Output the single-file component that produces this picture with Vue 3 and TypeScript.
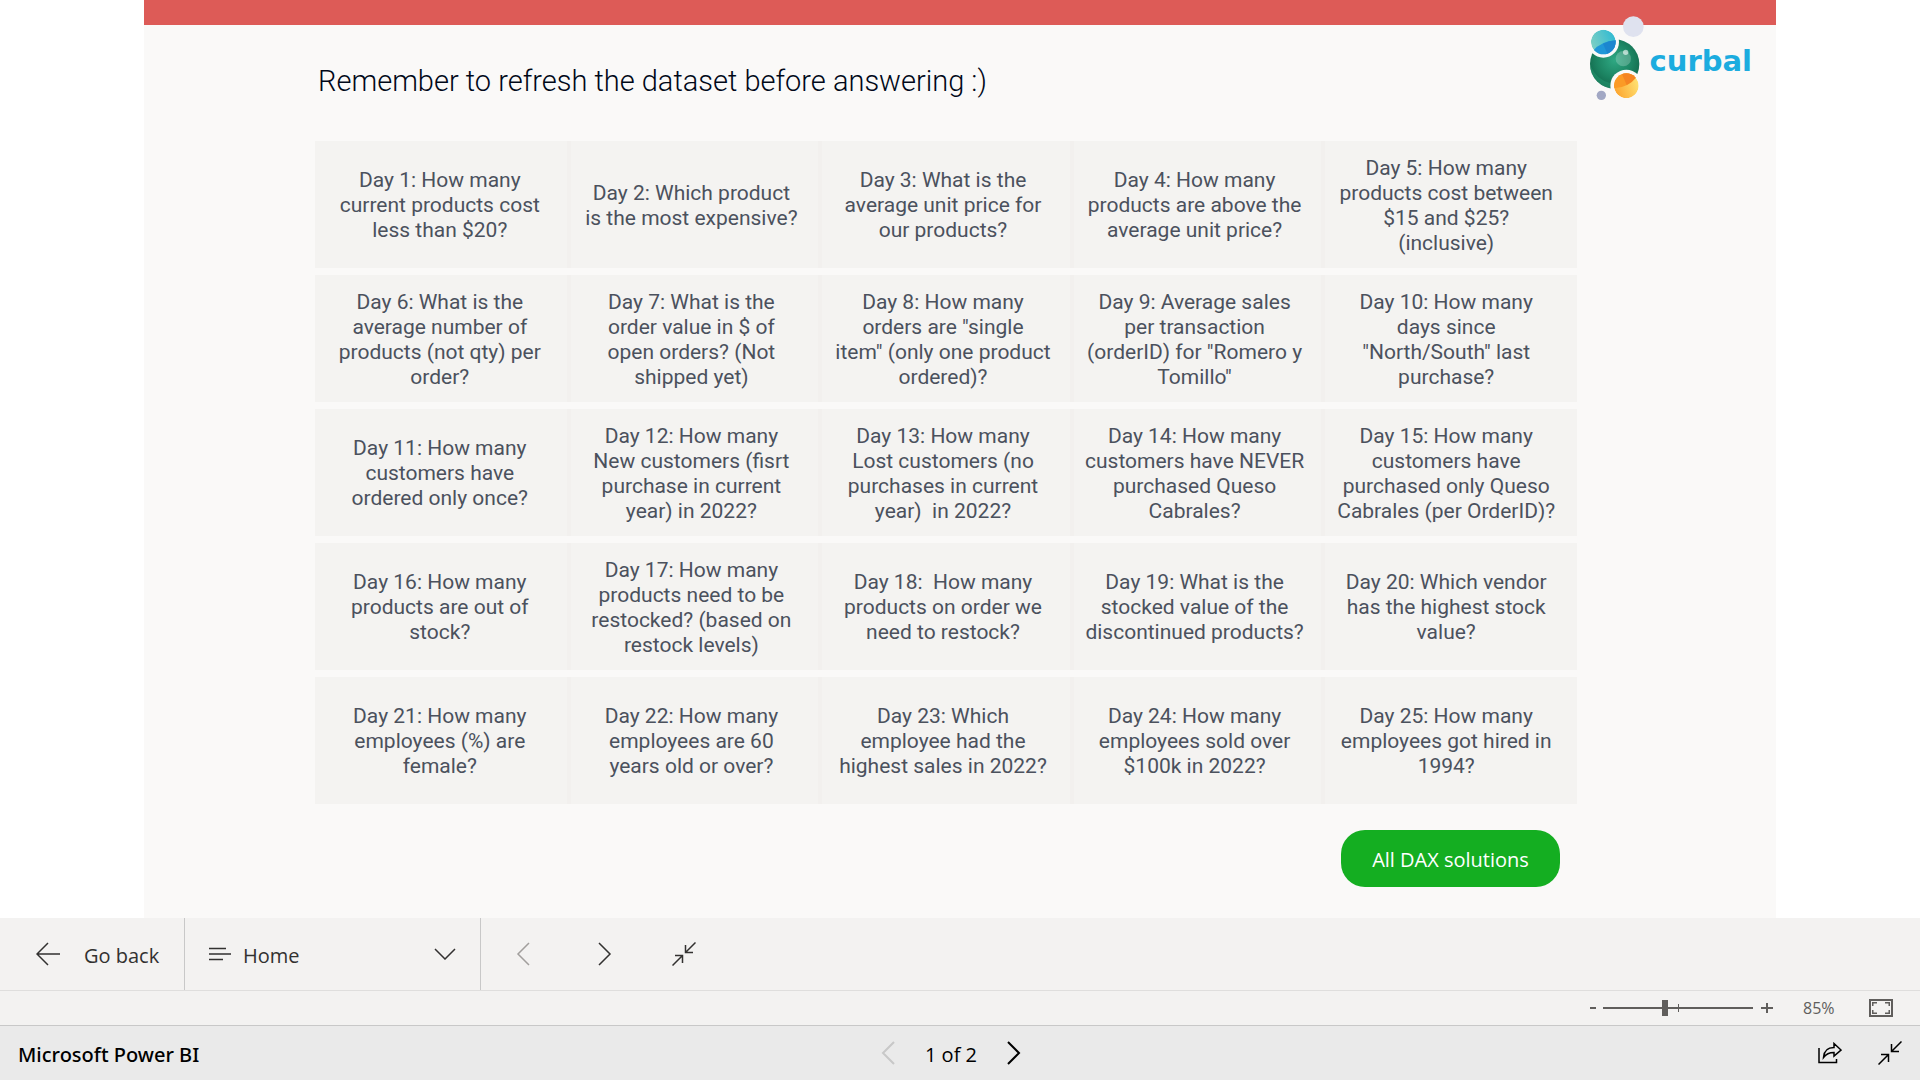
<script setup lang="ts">
import { ref } from 'vue'

const questions: string[] = [
  'Day 1: How many\ncurrent products cost\nless than $20?',
  'Day 2: Which product\nis the most expensive?',
  'Day 3: What is the\naverage unit price for\nour products?',
  'Day 4: How many\nproducts are above the\naverage unit price?',
  'Day 5: How many\nproducts cost between\n$15 and $25?\n(inclusive)',
  'Day 6: What is the\naverage number of\nproducts (not qty) per\norder?',
  'Day 7: What is the\norder value in $ of\nopen orders? (Not\nshipped yet)',
  'Day 8: How many\norders are "single\nitem" (only one product\nordered)?',
  'Day 9: Average sales\nper transaction\n(orderID) for "Romero y\nTomillo"',
  'Day 10: How many\ndays since\n"North/South" last\npurchase?',
  'Day 11: How many\ncustomers have\nordered only once?',
  'Day 12: How many\nNew customers (fisrt\npurchase in current\nyear) in 2022?',
  'Day 13: How many\nLost customers (no\npurchases in current\nyear)  in 2022?',
  'Day 14: How many\ncustomers have NEVER\npurchased Queso\nCabrales?',
  'Day 15: How many\ncustomers have\npurchased only Queso\nCabrales (per OrderID)?',
  'Day 16: How many\nproducts are out of\nstock?',
  'Day 17: How many\nproducts need to be\nrestocked? (based on\nrestock levels)',
  'Day 18:  How many\nproducts on order we\nneed to restock?',
  'Day 19: What is the\nstocked value of the\ndiscontinued products?',
  'Day 20: Which vendor\nhas the highest stock\nvalue?',
  'Day 21: How many\nemployees (%) are\nfemale?',
  'Day 22: How many\nemployees are 60\nyears old or over?',
  'Day 23: Which\nemployee had the\nhighest sales in 2022?',
  'Day 24: How many\nemployees sold over\n$100k in 2022?',
  'Day 25: How many\nemployees got hired in\n1994?',
]

const bookmark = ref('Home')
const zoomPosition = ref(41)
</script>

<template>
  <div class="app">
    <main class="report">
      <div class="logo">
        <svg class="logo-mark" viewBox="84 45 174 258" aria-hidden="true">
          <defs>
            <radialGradient id="g-green" cx="0.5" cy="0.42" r="0.6">
              <stop offset="0" stop-color="#2fa883" />
              <stop offset="0.6" stop-color="#1c8462" />
              <stop offset="1" stop-color="#12664a" />
            </radialGradient>
            <linearGradient id="g-cyan" x1="0" y1="0.6" x2="1" y2="0.2">
              <stop offset="0" stop-color="#7dcfc4" />
              <stop offset="1" stop-color="#2cb9d3" />
            </linearGradient>
            <linearGradient id="g-yellow" x1="0" y1="0.8" x2="1" y2="0.4">
              <stop offset="0" stop-color="#fca22c" />
              <stop offset="1" stop-color="#ffe172" />
            </linearGradient>
            <clipPath id="c-blue"><circle cx="130" cy="126" r="37" /></clipPath>
            <clipPath id="c-orange"><circle cx="199" cy="257" r="37" /></clipPath>
          </defs>
          <circle cx="220" cy="80" r="31" fill="#dfe2ef" />
          <circle cx="164" cy="192" r="74" fill="url(#g-green)" />
          <path d="M90 195Q110 240 152 250L152 265A74 74 0 0 1 90 195Z" fill="#23936d" opacity="0.6" />
          <circle cx="190" cy="176" r="23" fill="#fff" opacity="0.22" />
          <circle cx="197" cy="157" r="8" fill="#fff" opacity="0.6" />
          <circle cx="130" cy="126" r="47" fill="#faf9f8" />
          <circle cx="199" cy="257" r="48" fill="#faf9f8" />
          <g clip-path="url(#c-blue)">
            <circle cx="130" cy="126" r="37" fill="url(#g-cyan)" />
            <path d="M98 154Q122 123 170 121V170H98Z" fill="#2097d8" />
            <path d="M129 131Q147 122 170 121V170H146Z" fill="#1c86cf" />
          </g>
          <g clip-path="url(#c-orange)">
            <circle cx="199" cy="257" r="37" fill="url(#g-yellow)" />
            <path d="M158 265Q202 266 229 232V210H158Z" fill="#fb9a26" />
            <path d="M186 222L200 255Q217 247 229 232V210H186Z" fill="#f58422" />
          </g>
          <circle cx="124" cy="286" r="14" fill="#a2a8c4" />
        </svg>
        <span class="logo-text">curbal</span>
      </div>

      <h1 class="title">Remember to refresh the dataset before answering :)</h1>

      <div class="grid">
        <button v-for="q in questions" :key="q" type="button" class="card">{{ q }}</button>
      </div>

      <div class="actions">
        <button type="button" class="solutions">All DAX solutions</button>
      </div>
    </main>

    <nav class="toolbar">
      <button type="button" class="go-back">
        <svg width="24" height="24" viewBox="0 0 24 24"><path d="M12 1L1 12L12 23M1 12H24" /></svg>
        <span class="label">Go back</span>
      </button>
      <label class="bookmarks">
        <svg class="list-icon" width="22" height="14" viewBox="0 0 22 14"><path d="M0 1.5H17M0 7H22M0 12.5H14" /></svg>
        <select v-model="bookmark" class="label" aria-label="Page">
          <option>Home</option>
        </select>
        <svg class="caret" width="22" height="12" viewBox="0 0 22 12"><path d="M1 1L11 11L21 1" /></svg>
      </label>
      <div class="steps">
        <button type="button" class="icon-button" aria-label="Previous" disabled>
          <svg width="24" height="24" viewBox="0 0 24 24"><path d="M17 1L6 12L17 23" /></svg>
        </button>
        <button type="button" class="icon-button" aria-label="Next">
          <svg width="24" height="24" viewBox="0 0 24 24"><path d="M7 1L18 12L7 23" /></svg>
        </button>
        <button type="button" class="icon-button" aria-label="Exit full screen">
          <svg width="24" height="24" viewBox="0 0 24 24"><path d="M23.500 .5L14 10M13.500 3V10.500H21M.5 23.500L10 14M3 13.500H10.500V21" /></svg>
        </button>
      </div>
    </nav>

    <div class="zoombar">
      <button type="button" class="zoom-button" aria-label="Zoom out">
        <svg width="12" height="12" viewBox="0 0 12 12"><path d="M3 6H9" /></svg>
      </button>
      <div class="slider">
        <input v-model="zoomPosition" type="range" min="0" max="100" aria-label="Zoom" />
      </div>
      <button type="button" class="zoom-button" aria-label="Zoom in">
        <svg width="12" height="12" viewBox="0 0 12 12"><path d="M0 6H12M6 1V11" /></svg>
      </button>
      <span class="percent">85%</span>
      <button type="button" class="zoom-button" aria-label="Fit to page">
        <svg width="24" height="18" viewBox="0 0 24 18">
          <path d="M1 1H23V17H1Z" />
          <path class="thin" d="M3.750 7V3.750H8M16 3.750H20.250V7M20.250 11V14.250H16M8 14.250H3.750V11" />
        </svg>
      </button>
    </div>

    <footer class="footer">
      <a href="#" class="brand label">Microsoft Power BI</a>
      <div class="pager">
        <button type="button" class="page-button" aria-label="Previous page" disabled>
          <svg width="24" height="24" viewBox="0 0 24 24"><path d="M17 1L6 12L17 23" /></svg>
        </button>
        <span class="label">1 of 2</span>
        <button type="button" class="page-button" aria-label="Next page">
          <svg width="24" height="24" viewBox="0 0 24 24"><path d="M7 1L18 12L7 23" /></svg>
        </button>
      </div>
      <div class="footer-actions">
        <button type="button" class="page-button" aria-label="Share">
          <svg class="thin" width="24" height="22" viewBox="0 0 24 22"><path d="M1 6V20.500H18.500V17M5.500 15.500C6 8.500 10 5.500 16 5.500V1.500L23 8L16 14V10.500C11.500 10.500 8 12 5.500 15.500Z" /></svg>
        </button>
        <button type="button" class="page-button" aria-label="Exit full screen mode">
          <svg class="thin" width="24" height="24" viewBox="0 0 24 24"><path d="M23.500 .5L14 10M13.500 3V10.500H21M.5 23.500L10 14M3 13.500H10.500V21" /></svg>
        </button>
      </div>
    </footer>
  </div>
</template>

<style>
body {
  background: #fff;
}
</style>

<style scoped>
.app {
  display: flex;
  flex-direction: column;
  min-height: 100vh;
  font-family: 'Open Sans', 'Noto Sans', sans-serif;
  font-size: 20px;
  color: #323130;
}

.app * {
  box-sizing: border-box;
}

button,
select {
  margin: 0;
  padding: 0;
  border: 0;
  border-radius: 0;
  background: none;
  color: inherit;
  font: inherit;
}

svg {
  display: block;
  flex: none;
  fill: none;
  stroke: currentColor;
  stroke-width: 2px;
}

.label {
  padding-top: 2px;
}

.report {
  position: relative;
  flex: 1;
  margin: 0 7.5%;
  padding: 36px 203px 30px 171px;
  border-top: 25px solid #dd5b57;
  background: #faf9f8;
}

.logo {
  position: absolute;
  top: -10px;
  right: 24px;
  display: flex;
  align-items: center;
  gap: 4px;
}

.logo-mark {
  width: 58px;
  height: 86px;
  stroke: none;
}

.logo-text {
  padding-top: 6px;
  font-family: 'DejaVu Sans', sans-serif;
  font-weight: 700;
  font-size: 29px;
  line-height: 40px;
  color: #1cacdf;
}

.title {
  margin: 0 0 40px;
  padding-left: 3px;
  font-family: Roboto, sans-serif;
  font-weight: 300;
  font-size: 29px;
  line-height: 40px;
  color: #000818;
  white-space: nowrap;
}

.grid {
  display: grid;
  grid-template-columns: repeat(5, 1fr);
  grid-auto-rows: 127px;
  row-gap: 7px;
}

.card {
  margin-right: -4px;
  padding: 2px 6px 0 0;
  background: rgba(240, 239, 237, 0.6);
  font-family: Roboto, sans-serif;
  font-size: 21px;
  line-height: 25px;
  color: #4b515d;
  text-align: center;
  white-space: pre;
}

.actions {
  display: flex;
  justify-content: flex-end;
  padding: 26px 13px 0 0;
}

.solutions {
  width: 219px;
  height: 57px;
  padding-top: 2px;
  border-radius: 24px;
  background: #14ae21;
  color: #fff;
}

.toolbar {
  display: flex;
  height: 73px;
  border-bottom: 1px solid #dfdedd;
  background: #f3f2f1;
}

.toolbar svg {
  stroke-width: 1.500px;
}

.go-back {
  display: flex;
  align-items: center;
  gap: 24px;
  width: 185px;
  padding-left: 36px;
  border-right: 1px solid #c8c8c8;
}

.bookmarks {
  position: relative;
  display: flex;
  align-items: center;
  width: 296px;
  padding-left: 24px;
  border-right: 1px solid #c8c8c8;
}

.bookmarks select {
  flex: 1;
  height: 100%;
  padding-left: 12px;
  appearance: none;
}

.caret {
  position: absolute;
  right: 24px;
  pointer-events: none;
}

.steps {
  display: flex;
  align-items: center;
  gap: 56px;
  padding-left: 31px;
}

.icon-button:disabled {
  color: #a19f9d;
}

.zoombar {
  display: flex;
  align-items: center;
  justify-content: flex-end;
  height: 35px;
  padding-right: 27px;
  border-bottom: 1px solid #c8c8c8;
  background: #f3f2f1;
  color: #605e5c;
}

.slider {
  position: relative;
  width: 150px;
  height: 16px;
  margin: 0 8px 0 4px;
}

.slider::after {
  content: '';
  position: absolute;
  top: 4px;
  left: 50%;
  width: 1px;
  height: 8px;
  background: #605e5c;
}

.slider input {
  display: block;
  width: 100%;
  height: 16px;
  margin: 0;
  appearance: none;
  background: linear-gradient(#605e5c, #605e5c) center / 100% 2px no-repeat;
}

.slider input::-webkit-slider-thumb {
  appearance: none;
  width: 6px;
  height: 16px;
  background: #605e5c;
}

.percent {
  width: 34px;
  margin: 0 32px 0 30px;
  font-size: 16px;
}

.thin {
  stroke-width: 1.500px;
}

.footer {
  display: grid;
  grid-template-columns: 1fr auto 1fr;
  align-items: center;
  height: 54px;
  padding: 0 18px;
  background: #eaeaea;
  color: #000;
}

.brand {
  color: #000;
  font-family: 'Noto Sans', 'Open Sans', sans-serif;
  font-weight: 500;
  text-decoration: none;
}

.pager {
  display: flex;
  align-items: center;
  gap: 24px;
  margin-right: 18px;
}

.page-button:disabled {
  color: #c8c8c8;
}

.footer-actions {
  display: flex;
  align-items: center;
  justify-content: flex-end;
  gap: 36px;
}
</style>
